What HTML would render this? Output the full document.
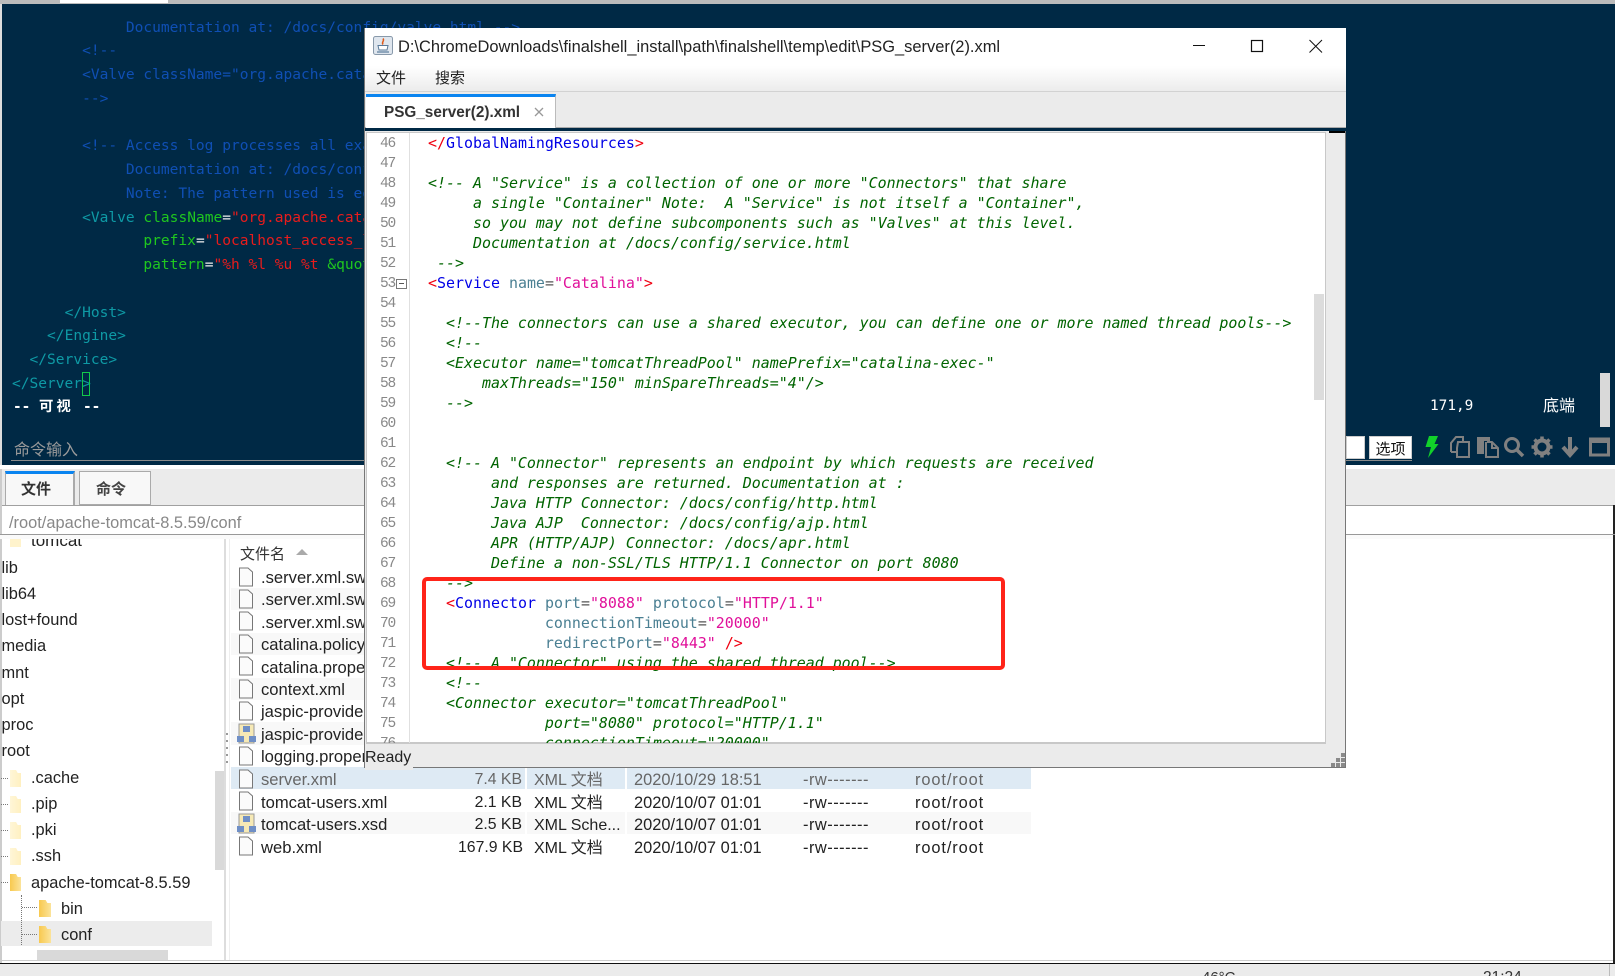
<!DOCTYPE html>
<html><head><meta charset="utf-8">
<style>
html,body{margin:0;padding:0;width:1615px;height:976px;overflow:hidden;background:#fff}
*{box-sizing:border-box}
.a{position:absolute}
.s{font-family:"Liberation Sans","Noto Sans CJK SC",sans-serif;white-space:pre}
pre{margin:0}
#term{left:2px;top:4px;width:1613px;height:461px;background:#002945;overflow:hidden}
#tt{left:12px;top:15.5px;font:14.55px/23.75px "DejaVu Sans Mono","Noto Sans CJK SC",monospace;color:#0f4fb4}
.te{color:#0e9aa5}.tg{color:#1fc71f}.tr{color:#e81c1c}.tw{color:#eee}
.tree{font-size:16.4px;line-height:24px;color:#222;height:24px}
.row{left:231px;width:800px;height:22.4px}
.z{background:#f8f8f8}
.f{font-size:16.6px;line-height:24px;color:#222;height:24px}
.k{font-size:15.8px}
.p{letter-spacing:.5px;font-size:16.4px}
.o{letter-spacing:.9px;font-size:16.4px}
.g{color:#666}
#code{left:428px;top:133px;font:14.95px/20px "DejaVu Sans Mono",monospace;color:#006400;font-style:italic}
#code b{font-weight:normal;font-style:normal}
.r{color:#f00010}.b{color:#0000e6}.t{color:#4a7f92}.m{color:#e0109a}.e{color:#555}
#nums{left:367px;top:133px;width:28px;text-align:right;font:14.5px/20px "Liberation Mono",monospace;color:#888;letter-spacing:-1.2px}
.fd{clip-path:polygon(0 0,55% 0,70% 18%,100% 18%,100% 100%,0 100%)}
</style></head><body>

<!-- top strip -->
<div class="a" style="left:0;top:0;width:1615px;height:4px;background:#bbb"></div>
<div class="a" style="left:60px;top:0;width:108px;height:3px;background:#fff"></div>
<div class="a" style="left:0;top:4px;width:2px;height:461px;background:#ddd"></div>

<!-- terminal -->
<div class="a" id="term"></div>
<pre class="a" id="tt">             Documentation at: /docs/config/valve.html --&gt;
        &lt;!--
        &lt;Valve className="org.apache.catalina.valves.RemoteAddrValve"
        --&gt;

        &lt;!-- Access log processes all example.
             Documentation at: /docs/config/valve.html
             Note: The pattern used is equivalent
        <span class="te">&lt;Valve</span> <span class="tg">className</span><span class="tw">=</span><span class="tr">"org.apache.catalina.valves"</span>
               <span class="tg">prefix</span><span class="tw">=</span><span class="tr">"localhost_access_log"</span>
               <span class="tg">pattern</span><span class="tw">=</span><span class="tr">"%h %l %u %t </span><span class="tg">&amp;quot;</span>

      <span class="te">&lt;/Host&gt;</span>
    <span class="te">&lt;/Engine&gt;</span>
  <span class="te">&lt;/Service&gt;</span>
<span class="te">&lt;/Server&gt;</span></pre>
<pre class="a" style="left:13px;top:395px;font:bold 14.4px/24px 'DejaVu Sans Mono','Noto Sans CJK SC',monospace;color:#fff">--</pre>
<pre class="a s" style="left:39px;top:395px;font-size:14.4px;line-height:24px;font-weight:bold;letter-spacing:3px;color:#fff">可视</pre>
<pre class="a" style="left:83px;top:395px;font:bold 14.4px/24px 'DejaVu Sans Mono',monospace;color:#fff">--</pre>
<div class="a" style="left:82px;top:372px;width:8px;height:24px;border:1px solid #13c94a"></div>
<div class="a" style="left:1430px;top:394px;font:14.4px/24px 'DejaVu Sans Mono',monospace;color:#fff">171,9</div>
<div class="a s" style="left:1543px;top:395px;font-size:16px;line-height:24px;color:#fff">底端</div>
<div class="a" style="left:1600px;top:373px;width:10px;height:54px;background:#d9d9d9"></div>
<div class="a s" style="left:14px;top:439px;font-size:16px;line-height:24px;color:#9a9a9a">命令输入</div>
<div class="a" style="left:11px;top:460px;width:1401px;height:1px;background:#8a8a8a"></div>

<!-- terminal toolbar -->
<div class="a" style="left:1346px;top:436px;width:19px;height:23px;background:#fff;border:1px solid #ccc"></div>
<div class="a s" style="left:1369px;top:436px;width:43px;height:23px;background:#fff;border:1px solid #ccc;font-size:15px;line-height:25px;text-align:center;color:#111">选项</div>
<svg class="a" style="left:1420px;top:430px" width="195" height="35" viewBox="0 0 195 35">
<path d="M9 6 L18 6 L14.500 14 L18.500 14 L8 28 L11 17 L5.500 17 Z" fill="#12d12a"/>
<g fill="none" stroke="#808080" stroke-width="2">
<path d="M31 22 V13 L36 7 H43 V11"/><path d="M31 22 H37"/><path d="M38 12 H49 V27 H37 V18 Z"/>
<path d="M67 12 H72 L78 18 V27 H66 V12"/><path d="M72 12 V18 H78"/>
<circle cx="92" cy="15" r="6.5" stroke-width="3"/><path d="M97 20 L103 26" stroke-width="3.5"/>
</g>
<path d="M57 7 H70 V11 H64 V24 H57 Z" fill="#808080"/>
<circle cx="122" cy="17" r="6.5" fill="none" stroke="#808080" stroke-width="4"/>
<path d="M122 6.500 V10 M122 24 V27.500 M111.500 17 H115 M129 17 H132.500 M114.500 9.500 L117 12 M127 22 L129.500 24.500 M129.500 9.500 L127 12 M117 22 L114.500 24.500" stroke="#808080" stroke-width="3.5"/>
<path d="M150 7 V24 M143 17 L150 25 L157 17" fill="none" stroke="#808080" stroke-width="4"/>
<rect x="170.500" y="9" width="18" height="16" fill="none" stroke="#808080" stroke-width="3"/>
<rect x="170" y="8" width="19" height="5" fill="#808080"/>
</svg>

<!-- lower panel -->
<div class="a" style="left:0;top:465px;width:1615px;height:4px;background:#fff"></div>
<div class="a" style="left:0;top:469px;width:1615px;height:36px;background:#ebebeb"></div>
<div class="a" style="left:0;top:505px;width:1615px;height:1px;background:#a0a0a0"></div>
<div class="a" style="left:0;top:469px;width:2px;height:500px;background:#ccc"></div>
<div class="a" style="left:1613px;top:505px;width:2px;height:459px;background:#222"></div>
<div class="a s" style="left:5px;top:471px;width:70px;height:34px;background:#f8f8f8;border-top:3px solid #0a84f0;border-right:2px solid #aaa;border-left:1px solid #aaa;padding-left:15px;font-size:15px;line-height:32px;font-weight:bold;color:#333">文件</div>
<div class="a s" style="left:79px;top:471px;width:72px;height:34px;background:#f8f8f8;border:1px solid #aaa;padding-left:16px;font-size:15px;line-height:36px;font-weight:bold;color:#444">命令</div>
<div class="a s" style="left:9px;top:511px;font-size:16.4px;line-height:24px;color:#888">/root/apache-tomcat-8.5.59/conf</div>
<div class="a" style="left:0;top:534px;width:1615px;height:1px;background:#999"></div>
<div class="a" style="left:0;top:535px;width:1613px;height:4px;background:#fafafa"></div>

<!-- tree -->
<div class="a" style="left:0;top:539px;width:224px;height:421px;overflow:hidden">
<div class="a" style="left:1px;top:382px;width:211px;height:25px;background:#ececec"></div>
<div class="a" style="left:215px;top:232px;width:9px;height:99px;background:#d9d9d9"></div>
<div class="a" style="left:37px;top:411px;width:131px;height:10px;background:#d9d9d9"></div>
<div class="a s tree" style="left:31px;top:-10px;font-size:17px">tomcat</div>
<div class="a" style="left:10px;top:-6px;width:11px;height:14px;background:#fff3cc"></div>
<div class="a s tree" style="left:1.500px;top:17px">lib</div>
<div class="a s tree" style="left:1.500px;top:43px">lib64</div>
<div class="a s tree" style="left:1.500px;top:69px">lost+found</div>
<div class="a s tree" style="left:1.500px;top:95px">media</div>
<div class="a s tree" style="left:1.500px;top:122px">mnt</div>
<div class="a s tree" style="left:1.500px;top:148px">opt</div>
<div class="a s tree" style="left:1.500px;top:174px">proc</div>
<div class="a s tree" style="left:1.500px;top:200px">root</div>
<div class="a s tree" style="left:31px;top:227px">.cache</div>
<div class="a s tree" style="left:31px;top:253px">.pip</div>
<div class="a s tree" style="left:31px;top:279px">.pki</div>
<div class="a s tree" style="left:31px;top:305px">.ssh</div>
<div class="a s tree" style="left:31px;top:332px">apache-tomcat-8.5.59</div>
<div class="a s tree" style="left:61px;top:358px">bin</div>
<div class="a s tree" style="left:61px;top:384px">conf</div>
<div class="a fd" style="left:10px;top:231px;width:11px;height:17px;background:linear-gradient(90deg,#fff6d8,#fff0c0)"></div>
<div class="a fd" style="left:10px;top:257px;width:11px;height:17px;background:linear-gradient(90deg,#fff6d8,#fff0c0)"></div>
<div class="a fd" style="left:10px;top:283px;width:11px;height:17px;background:linear-gradient(90deg,#fff6d8,#fff0c0)"></div>
<div class="a fd" style="left:10px;top:309px;width:11px;height:17px;background:linear-gradient(90deg,#fff6d8,#fff0c0)"></div>
<div class="a fd" style="left:10px;top:335px;width:11px;height:17px;background:linear-gradient(90deg,#f8c94f,#fbe39a)"></div>
<div class="a fd" style="left:39px;top:361px;width:12px;height:17px;background:linear-gradient(90deg,#f8c94f,#fbe39a)"></div>
<div class="a fd" style="left:39px;top:387px;width:12px;height:17px;background:linear-gradient(90deg,#f8c94f,#fbe39a)"></div>
<div class="a" style="left:21px;top:356px;width:0;height:50px;border-left:1px dotted #777"></div>
<div class="a" style="left:22px;top:368px;width:15px;border-top:1px dotted #777"></div>
<div class="a" style="left:22px;top:395px;width:15px;border-top:1px dotted #777"></div>
<div class="a" style="left:1px;top:239px;width:7px;border-top:1px dotted #777"></div>
<div class="a" style="left:1px;top:265px;width:7px;border-top:1px dotted #777"></div>
<div class="a" style="left:1px;top:291px;width:7px;border-top:1px dotted #777"></div>
<div class="a" style="left:1px;top:317px;width:7px;border-top:1px dotted #777"></div>
<div class="a" style="left:1px;top:343px;width:7px;border-top:1px dotted #777"></div>
</div>
<div class="a" style="left:224px;top:539px;width:2px;height:421px;background:#ddd"></div>
<div class="a" style="left:226px;top:733px;width:2px;height:32px;background:repeating-linear-gradient(180deg,#999 0 2px,transparent 2px 7px)"></div>
<div class="a" style="left:229px;top:539px;width:1px;height:421px;background:#eee"></div>

<!-- file list -->
<div class="a s" style="left:240px;top:544px;font-size:15px;line-height:22px;color:#333">文件名</div>
<div class="a" style="left:296px;top:549px;width:0;height:0;border-left:6px solid transparent;border-right:6px solid transparent;border-bottom:6px solid #aaa"></div>

<div class="a row z" style="top:588px"></div>
<div class="a row z" style="top:632.800px"></div>
<div class="a row z" style="top:677.600px"></div>
<div class="a row z" style="top:722.400px"></div>
<div class="a row" style="top:767px;background:#deeaf4"></div>
<div class="a row z" style="top:812px"></div>
<div class="a" style="left:525px;top:767px;width:1.500px;height:23px;background:#fff"></div>
<div class="a" style="left:625px;top:767px;width:1.500px;height:23px;background:#fff"></div>
<div class="a" style="left:525px;top:812px;width:1.500px;height:23px;background:#fff"></div>
<div class="a" style="left:625px;top:812px;width:1.500px;height:23px;background:#fff"></div>

<div class="a s f" style="left:261px;top:566px">.server.xml.swo</div>
<div class="a s f" style="left:261px;top:588px">.server.xml.swp</div>
<div class="a s f" style="left:261px;top:611px">.server.xml.swx</div>
<div class="a s f" style="left:261px;top:633px">catalina.policy</div>
<div class="a s f" style="left:261px;top:656px">catalina.properties</div>
<div class="a s f" style="left:261px;top:678px">context.xml</div>
<div class="a s f" style="left:261px;top:700px">jaspic-providers.xml</div>
<div class="a s f" style="left:261px;top:723px">jaspic-providers.xsd</div>
<div class="a s f" style="left:261px;top:745px">logging.properties</div>
<div class="a s f g" style="left:261px;top:768px">server.xml</div>
<div class="a s f" style="left:261px;top:791px">tomcat-users.xml</div>
<div class="a s f" style="left:261px;top:813px">tomcat-users.xsd</div>
<div class="a s f" style="left:261px;top:836px">web.xml</div>

<svg class="a" style="left:237px;top:566px" width="22" height="292" viewBox="0 0 22 292">
<defs><g id="d"><path d="M2.500 1 H11 L15.500 5 V19 H2.500 Z" fill="#fbfbfb" stroke="#777" stroke-width="1"/></g>
<g id="x"><rect x="2" y="0" width="15" height="19" fill="#f6e9b5" stroke="#999"/><rect x="6" y="2" width="7" height="6" fill="#6f8fc6"/><rect x="0" y="12" width="7" height="6" fill="#6f8fc6"/><rect x="12" y="12" width="7" height="6" fill="#6f8fc6"/></g></defs>
<use href="#d" y="1"/><use href="#d" y="23"/><use href="#d" y="45"/><use href="#d" y="68"/><use href="#d" y="90"/><use href="#d" y="113"/><use href="#d" y="135"/>
<use href="#x" y="158"/><use href="#d" y="180"/><use href="#d" y="203"/><use href="#d" y="225"/><use href="#x" y="248"/><use href="#d" y="270"/>
</svg>

<div class="a s f k g" style="left:421px;top:768px;width:101px;text-align:right">7.4 KB</div>
<div class="a s f k" style="left:421px;top:791px;width:101px;text-align:right">2.1 KB</div>
<div class="a s f k" style="left:421px;top:813px;width:101px;text-align:right">2.5 KB</div>
<div class="a s f k" style="left:421px;top:836px;width:102px;text-align:right">167.9 KB</div>
<div class="a s f g" style="left:534px;top:769px;font-size:16px">XML 文档</div>
<div class="a s f" style="left:534px;top:792px;font-size:16px">XML 文档</div>
<div class="a s f" style="left:534px;top:813.500px;font-size:16px">XML Sche...</div>
<div class="a s f" style="left:534px;top:837px;font-size:16px">XML 文档</div>
<div class="a s f g" style="left:634px;top:768px;font-size:16.4px">2020/10/29 18:51</div>
<div class="a s f" style="left:634px;top:791px;font-size:16.4px">2020/10/07 01:01</div>
<div class="a s f" style="left:634px;top:813px;font-size:16.4px">2020/10/07 01:01</div>
<div class="a s f" style="left:634px;top:836px;font-size:16.4px">2020/10/07 01:01</div>
<div class="a s f p g" style="left:803px;top:768px">-rw-------</div>
<div class="a s f p" style="left:803px;top:791px">-rw-------</div>
<div class="a s f p" style="left:803px;top:813px">-rw-------</div>
<div class="a s f p" style="left:803px;top:836px">-rw-------</div>
<div class="a s f o g" style="left:915px;top:768px">root/root</div>
<div class="a s f o" style="left:915px;top:791px">root/root</div>
<div class="a s f o" style="left:915px;top:813px">root/root</div>
<div class="a s f o" style="left:915px;top:836px">root/root</div>

<!-- bottom -->
<div class="a" style="left:0;top:960px;width:1613px;height:1px;background:#ccc"></div>
<div class="a" style="left:0;top:963px;width:1615px;height:1px;background:#111"></div>
<div class="a" style="left:0;top:964px;width:1615px;height:12px;background:#ebebeb;overflow:hidden">
<div class="a s" style="left:1202px;top:5px;font-size:15px;line-height:18px;color:#333">46°C</div>
<div class="a s" style="left:1483px;top:5px;font-size:15.5px;line-height:18px;color:#333">21:24</div>
<div class="a" style="left:1609px;top:0;width:1px;height:12px;background:#bbb"></div>
</div>

<!-- editor window -->
<div class="a" style="left:364px;top:28px;width:982px;height:740px;background:#ebebeb;overflow:hidden">
<div class="a" style="left:0;top:0;width:982px;height:63px;background:linear-gradient(180deg,#fff 0,#fff 60%,#ececec 100%)"></div>
<div class="a" style="left:0;top:63px;width:982px;height:1px;background:#d2d2d2"></div>
<div class="a" style="left:0;top:99px;width:982px;height:1px;background:#aaa"></div>
<div class="a" style="left:0;top:100px;width:982px;height:3px;background:#002945"></div>
<div class="a" style="left:965px;top:103px;width:17px;height:2px;background:#000"></div>
<div class="a" style="left:2px;top:66px;width:190px;height:34px;background:#fff;border-top:3px solid #0a84f0;border-right:1px solid #bbb"></div>
</div>
<div class="a" style="left:364px;top:28px;width:1px;height:740px;background:#777"></div>
<div class="a" style="left:1345px;top:131px;width:1px;height:637px;background:#777"></div>
<div class="a" style="left:364px;top:767px;width:982px;height:1px;background:#777"></div>

<svg class="a" style="left:373px;top:36px" width="22" height="21" viewBox="0 0 22 21">
<rect x=".5" y=".5" width="19" height="18" rx="2" fill="#dfe6ee" stroke="#8899aa"/>
<path d="M10 2.500 C12 5 8 6 10 8.500" fill="none" stroke="#e05a1a" stroke-width="1.500"/>
<path d="M5 9.500 H15 L14 14 H6 Z" fill="#fff" stroke="#5a7a9a"/>
<path d="M4 16 H16" stroke="#5a7a9a" stroke-width="1.200"/>
</svg>
<div class="a s" style="left:398px;top:36px;font-size:16.45px;line-height:22px;color:#222">D:\ChromeDownloads\finalshell_install\path\finalshell\temp\edit\PSG_server(2).xml</div>
<svg class="a" style="left:1190px;top:36px" width="140" height="20" viewBox="0 0 140 20">
<path d="M3 9.500 H15" stroke="#111" stroke-width="1"/>
<rect x="61.500" y="4.500" width="11" height="11" fill="none" stroke="#111" stroke-width="1.200"/>
<path d="M119.500 4 L132 16.500 M132 4 L119.500 16.500" stroke="#111" stroke-width="1"/>
</svg>
<div class="a s" style="left:376px;top:68px;font-size:15px;line-height:22px;color:#222">文件</div>
<div class="a s" style="left:435px;top:68px;font-size:15px;line-height:22px;color:#222">搜索</div>
<div class="a s" style="left:384px;top:100.500px;font-size:15.3px;line-height:24px;font-weight:bold;color:#333">PSG_server(2).xml</div>
<svg class="a" style="left:533px;top:106px" width="12" height="12" viewBox="0 0 12 12"><path d="M2 2 L10 10 M10 2 L2 10" stroke="#999" stroke-width="1.300"/></svg>

<!-- editor text -->
<div class="a" style="left:366px;top:132px;width:960px;height:612px;background:#fff;border:1px solid #c8c8c8;border-bottom:2px solid #c8c8c8"></div>
<div class="a" style="left:409px;top:133px;width:1px;height:610px;background:#e0e0e0"></div>
<div class="a" style="left:1314px;top:294px;width:10px;height:106px;background:#dcdcdc"></div>
<div class="a" style="left:367px;top:133px;width:958px;height:610px;overflow:hidden">
<pre class="a" id="nums" style="left:0;top:1px">46
47
48
49
50
51
52
53
54
55
56
57
58
59
60
61
62
63
64
65
66
67
68
69
70
71
72
73
74
75
76</pre>
<div class="a" style="left:29px;top:146px;width:11px;height:10px;border:1px solid #777;background:#fff"></div>
<div class="a" style="left:32px;top:150px;width:5px;height:1px;background:#555"></div>
<pre class="a" id="code" style="left:61px;top:0"><b><span class="r">&lt;/</span><span class="b">GlobalNamingResources</span><span class="r">&gt;</span></b>

&lt;!-- A "Service" is a collection of one or more "Connectors" that share
     a single "Container" Note:  A "Service" is not itself a "Container",
     so you may not define subcomponents such as "Valves" at this level.
     Documentation at /docs/config/service.html
 --&gt;
<b><span class="r">&lt;</span><span class="b">Service</span> <span class="t">name</span><span class="e">=</span><span class="m">"Catalina"</span><span class="r">&gt;</span></b>

  &lt;!--The connectors can use a shared executor, you can define one or more named thread pools--&gt;
  &lt;!--
  &lt;Executor name="tomcatThreadPool" namePrefix="catalina-exec-"
      maxThreads="150" minSpareThreads="4"/&gt;
  --&gt;


  &lt;!-- A "Connector" represents an endpoint by which requests are received
       and responses are returned. Documentation at :
       Java HTTP Connector: /docs/config/http.html
       Java AJP  Connector: /docs/config/ajp.html
       APR (HTTP/AJP) Connector: /docs/apr.html
       Define a non-SSL/TLS HTTP/1.1 Connector on port 8080
  --&gt;
  <b><span class="r">&lt;</span><span class="b">Connector</span> <span class="t">port</span><span class="e">=</span><span class="m">"8088"</span> <span class="t">protocol</span><span class="e">=</span><span class="m">"HTTP/1.1"</span></b>
             <b><span class="t">connectionTimeout</span><span class="e">=</span><span class="m">"20000"</span></b>
             <b><span class="t">redirectPort</span><span class="e">=</span><span class="m">"8443"</span> <span class="r">/&gt;</span></b>
  &lt;!-- A "Connector" using the shared thread pool--&gt;
  &lt;!--
  &lt;Connector executor="tomcatThreadPool"
             port="8080" protocol="HTTP/1.1"
             connectionTimeout="20000"</pre>
</div>

<!-- status -->
<div class="a s" style="left:365px;top:746px;font-size:16px;line-height:24px;color:#222;background:#ebebeb;padding-right:2px">Ready</div>
<svg class="a" style="left:1330px;top:752px" width="16" height="16" viewBox="0 0 16 16" fill="#8a8a8a">
<rect x="11" y="1" width="4" height="4"/><rect x="6" y="6" width="4" height="4"/><rect x="11" y="6" width="4" height="4"/><rect x="1" y="11" width="4" height="4"/><rect x="6" y="11" width="4" height="4"/><rect x="11" y="11" width="4" height="4"/>
</svg>

<!-- red annotation -->
<div class="a" style="left:422px;top:577px;width:583px;height:93px;border:4px solid #ff2419;border-radius:5px"></div>

</body></html>
